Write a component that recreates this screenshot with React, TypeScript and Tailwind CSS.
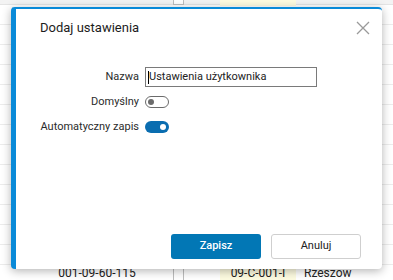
import React from "react";

const rows = Array.from({ length: 14 });

export default function App() {
  return (
    <div
      className="relative w-[393px] h-[280px] overflow-hidden bg-white"
      style={{ fontFamily: "Roboto, 'Liberation Sans', sans-serif" }}
    >
      {/* background table */}
      <div className="absolute inset-0">
        <div className="h-[5px] bg-[#f3f3f3] border-b border-[#e4e4e4]" />
        {rows.map((_, i) => (
          <div key={i} className="h-[20px] border-b border-[#ececec]" />
        ))}
      </div>
      <div className="absolute left-[173px] top-0 w-[11px] h-[5px] border border-[#bdbdbd] border-t-0 bg-white" />
      <div className="absolute left-[220px] top-0 w-[76px] h-[6px] bg-[#fdfbe0]" />
      <div className="absolute left-0 top-[265px] w-[393px] h-[15px] flex items-center text-[12px] text-[#222]">
        <div className="w-[173px] text-center pl-[21px] leading-none">001-09-60-115</div>
        <div className="w-[11px] h-[15px] border-l border-r border-[#bdbdbd]" />
        <div className="w-[36px]" />
        <div className="w-[76px] h-[15px] bg-[#fdfbe0] flex items-center justify-center leading-none">09-C-001-I</div>
        <div className="pl-[8px] leading-none">Rzeszów</div>
      </div>

      {/* dialog */}
      <div className="absolute left-[11px] top-[7px] w-[371px] h-[262px] rounded-[4px] bg-white border-l-[5px] border-t-2 border-[#0a8ad8] shadow-[0_2px_10px_rgba(0,0,0,0.3)] flex flex-col">
        <div className="flex items-start justify-between pl-[24px] pr-[12px] pt-[10px]">
          <div className="text-[13px] text-[#1c1c1c] leading-[18px]">Dodaj ustawienia</div>
          <svg width="14" height="14" viewBox="0 0 14 14" className="mt-[2px]">
            <path d="M1 1L13 13M13 1L1 13" stroke="#9a9a9a" strokeWidth="1.3" />
          </svg>
        </div>
        <div className="mt-[30px] grid grid-cols-[123px_1fr] gap-x-[6px] gap-y-[5px] items-center text-[11px] text-[#2b2b2b]">
          <div className="text-right">Nazwa</div>
          <div className="w-[172px] h-[20px] border border-[#7a7a7a] flex items-center px-[2px] text-[11px] text-[#222]">
            <span className="w-px h-[13px] bg-black" />Ustawienia użytkownika
          </div>
          <div className="text-right">Domyślny</div>
          <div className="h-[20px] flex items-center">
            <div className="w-[24px] h-[12px] rounded-full border border-[#6b6b6b] flex items-center px-[2px]">
              <div className="w-[6px] h-[6px] rounded-full bg-[#6b6b6b]" />
            </div>
          </div>
          <div className="text-right">Automatyczny zapis</div>
          <div className="h-[20px] flex items-center">
            <div className="w-[24px] h-[12px] rounded-full bg-[#0a6db0] flex items-center justify-end px-[3px]">
              <div className="w-[6px] h-[6px] rounded-full bg-white" />
            </div>
          </div>
        </div>
        <div className="mt-auto mb-[10px] flex justify-end gap-[10px] pr-[21px]">
          <button className="w-[90px] h-[25px] rounded-[3px] bg-[#0277b5] text-white text-[11px] font-medium">Zapisz</button>
          <button className="w-[90px] h-[25px] rounded-[3px] bg-white border border-[#cfcfcf] text-[#222] text-[11px]">Anuluj</button>
        </div>
      </div>
    </div>
  );
}
